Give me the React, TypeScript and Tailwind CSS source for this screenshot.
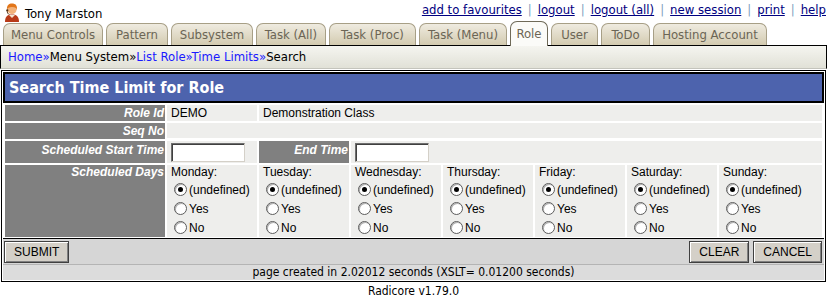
import React from "react";

const tahoma = "font-['DejaVu_Sans_Condensed','DejaVu_Sans',sans-serif]";
const arial = "font-['Liberation_Sans',Arial,sans-serif]";

const tabs = [
  { name: "Menu Controls", w: "w-[100px]" },
  { name: "Pattern", w: "w-[62px]" },
  { name: "Subsystem", w: "w-[82px]" },
  { name: "Task (All)", w: "w-[70px]" },
  { name: "Task (Proc)", w: "w-[87px]" },
  { name: "Task (Menu)", w: "w-[88px]" },
  { name: "Role", w: "w-[38px]", active: true },
  { name: "User", w: "w-[47px]" },
  { name: "ToDo", w: "w-[49px]" },
  { name: "Hosting Account", w: "w-[114px]" },
];

const links = ["add to favourites", "logout", "logout (all)", "new session", "print", "help"];

const days = ["Monday", "Tuesday", "Wednesday", "Thursday", "Friday", "Saturday", "Sunday"];

function Avatar() {
  return (
    <svg width="18" height="20" viewBox="0 0 18 20">
      <path d="M2 20 C2 14 5 12.5 9 12.5 C13 12.5 16 14 16 20 Z" fill="#b83a18" />
      <path d="M6 13 L9 16 L12 13 Z" fill="#f3e6d0" />
      <circle cx="9" cy="7.5" r="4.6" fill="#f2b27a" />
      <path d="M4 8 C3.5 3 6 1.5 9 1.5 C12.5 1.5 14.5 3.5 14 8 L13 6 C11 5 8 4.5 5 6 Z" fill="#e2761a" />
      <path d="M4.2 8 C4 11 5 12 6.5 12.5" stroke="#5a3010" strokeWidth="0.9" fill="none" />
      <circle cx="4.3" cy="8.3" r="1.1" fill="#4a2a10" />
    </svg>
  );
}

function Radio({ checked }: { checked?: boolean }) {
  return (
    <span className="inline-flex items-center justify-center w-[13px] h-[13px] rounded-full border border-[#5c5c5c] bg-white shadow-[inset_1px_1px_0_#b0b0b0]">
      {checked && <span className="w-[5px] h-[5px] rounded-full bg-black" />}
    </span>
  );
}

function Label({ children, top }: { children: React.ReactNode; top?: boolean }) {
  return (
    <div
      className={`bg-[#808080] text-white font-bold italic text-[12px] text-right pr-[1px] ${arial} ${
        top ? "leading-[15px]" : "leading-[16px]"
      }`}
    >
      {children}
    </div>
  );
}

function TextBox() {
  return (
    <div className="w-[74px] h-[19px] bg-white border border-t-[#6e6e6e] border-l-[#6e6e6e] border-r-[#d4d0c8] border-b-[#d4d0c8] shadow-[inset_1px_1px_0_#404040]" />
  );
}

function Button({ children }: { children: React.ReactNode }) {
  return (
    <button
      className={`h-[22px] px-[9px] bg-[#d4d0c8] border border-[#404040] shadow-[inset_1px_1px_0_#ffffff,inset_-1px_-1px_0_#808080] text-[12px] text-black ${arial}`}
    >
      {children}
    </button>
  );
}

export default function App() {
  return (
    <div className="w-[827px] bg-white text-black">
      <div className={`flex items-center justify-between h-[22px] ${tahoma}`}>
        <div className="flex items-center gap-[4px] pl-[3px] pt-[2px]">
          <Avatar />
          <span className="text-[13px] text-black pt-[3px]">Tony Marston</span>
        </div>
        <div className="flex items-center text-[13px] pr-[1px] pb-[2px]">
          {links.map((l, i) => (
            <span key={l} className="flex items-center">
              {i > 0 && <span className="text-[#7f9fc0] px-[6px]">|</span>}
              <span className="text-[#000080] underline">{l}</span>
            </span>
          ))}
        </div>
      </div>

      <div className={`flex items-end gap-[3px] pl-[3px] h-[23px] ${tahoma}`}>
        {tabs.map((t) =>
          t.active ? (
            <div
              key={t.name}
              className={`${t.w} h-[25px] -mb-[1px] relative z-10 rounded-t-[7px] border border-b-0 border-[#6f6a58] bg-[#fbfbf8] text-[#6b6555] text-[13px] leading-[23px] text-center`}
            >
              {t.name}
            </div>
          ) : (
            <div
              key={t.name}
              className={`${t.w} h-[22px] rounded-t-[7px] border border-b-0 border-[#a79f86] bg-gradient-to-b from-[#efebe0] to-[#d3cbb0] text-[#6b6555] text-[13px] leading-[22px] text-center`}
            >
              {t.name}
            </div>
          )
        )}
      </div>

      <div
        className={`h-[24px] border border-black border-b-[#c4c4bc] bg-gradient-to-b from-[#f5f5f0] to-[#e1e1d7] pl-[7px] text-[13px] leading-[22px] ${tahoma}`}
      >
        <span className="text-[#1a1aff]">Home»</span>
        <span>Menu System»</span>
        <span className="text-[#1a1aff]">List Role»</span>
        <span className="text-[#1a1aff]">Time Limits»</span>
        <span>Search</span>
      </div>

      <div className="mt-[1px] mx-[1px] border border-black p-[1px]">
        <div
          className={`h-[31px] border-2 border-black bg-[#4d63ad] text-white font-bold text-[16px] leading-[27px] pl-[4px] ${tahoma}`}
        >
          Search Time Limit for Role
        </div>

        <div
          className={`grid grid-cols-[160px_90px_90px_90px_90px_90px_90px_1fr] gap-[2px] px-[2px] pt-[2px] pb-[1px] border-b border-black text-[12px] ${arial}`}
        >
          <Label>Role Id</Label>
          <div className="bg-[#eeeeec] pl-[4px] leading-[16px]">DEMO</div>
          <div className="col-span-6 bg-[#eeeeec] pl-[4px] leading-[16px]">Demonstration Class</div>

          <Label>Seq No</Label>
          <div className="col-span-7 bg-[#eeeeec] h-[15px]" />

          <div className="bg-[#808080] text-white font-bold italic text-right pr-[1px] h-[22px] pt-[1px] leading-[16px]">
            Scheduled Start Time
          </div>
          <div className="bg-[#eeeeec] pl-[4px] pt-[2px]">
            <TextBox />
          </div>
          <div className="bg-[#808080] text-white font-bold italic text-right pr-[1px] pt-[1px] leading-[16px]">
            End Time
          </div>
          <div className="col-span-5 bg-[#eeeeec] pl-[4px] pt-[2px]">
            <TextBox />
          </div>

          <Label top>Scheduled Days</Label>
          {days.map((d) => (
            <div key={d} className="bg-[#eeeeec] pl-[4px]">
              <div className="leading-[15px]">{d}:</div>
              {["(undefined)", "Yes", "No"].map((o, i) => (
                <div key={o} className="flex items-center h-[19px] pl-[3px] gap-[2px]">
                  <Radio checked={i === 0} />
                  <span className="leading-[14px] pt-[1px]">{o}</span>
                </div>
              ))}
            </div>
          ))}
        </div>

        <div className="flex items-center justify-between h-[25px] bg-[#d6d6d6] pl-[1px] pr-[2px]">
          <Button>SUBMIT</Button>
          <div className="flex gap-[4px]">
            <Button>CLEAR</Button>
            <Button>CANCEL</Button>
          </div>
        </div>

        <div className={`h-[16px] bg-[#dcdcdc] border-t border-[#b4b4b4] text-center text-[12px] leading-[15px] ${tahoma}`}>
          page created in 2.02012 seconds (XSLT= 0.01200 seconds)
        </div>
      </div>

      <div className={`text-center text-[12px] leading-[13px] pt-[3px] ${tahoma}`}>Radicore v1.79.0</div>
    </div>
  );
}
